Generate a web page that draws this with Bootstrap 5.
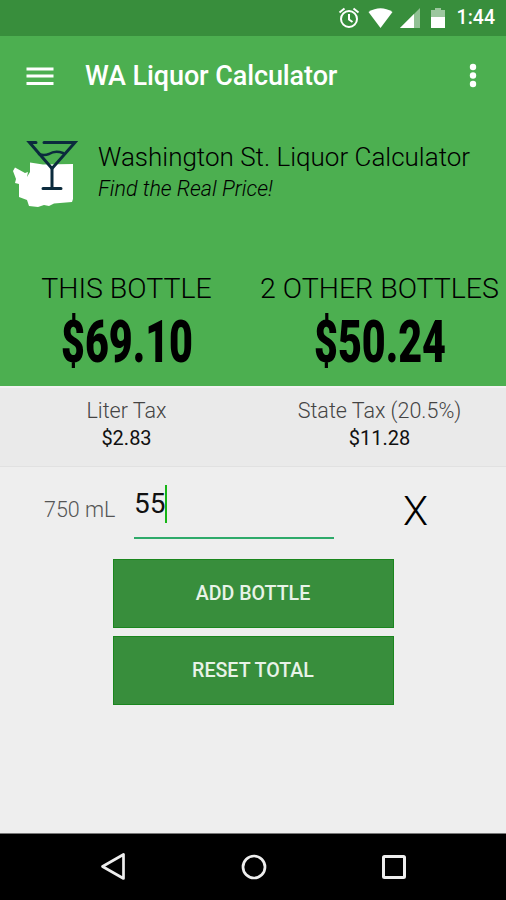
<!DOCTYPE html>
<html lang="en">
<head>
<meta charset="utf-8">
<meta name="viewport" content="width=device-width, initial-scale=1">
<title>WA Liquor Calculator</title>
<link href="https://cdn.jsdelivr.net/npm/bootstrap@5.3.0/dist/css/bootstrap.min.css" rel="stylesheet">
<style>
body{font-family:Roboto,"Liberation Sans",sans-serif;background:#eee;color:#000}
.screen{width:506px;height:900px;overflow:hidden;white-space:nowrap}
svg{display:block;flex:none}
.statusbar{height:36px;background:#388e3c;padding-right:11px}
.clock{font-size:19.5px;font-weight:500;line-height:36px;margin-left:9px}
.appbar{height:80px;padding:0 26px}
.hero{background:#4caf50;height:350px}
.app-title{font-size:27px;font-weight:500;line-height:80px;margin-left:31px;letter-spacing:-.1px}
.brand-row{height:100px;padding-left:12px}
.brand-text{margin-left:20px;padding-top:23px;font-weight:300}
.brand-name{font-size:26px;line-height:36px}
.tagline{font-size:21.5px;line-height:27px;font-style:italic}
.totals{margin-top:56px}
.total-label{font-size:28.5px;line-height:34px;font-weight:300}
.taxes{height:81px;background:#eaeaea;border-top:2px solid #f2f2f2;border-bottom:1px solid #e1e1e1;padding-top:9px}
.tax-label{font-size:21.5px;line-height:27px;font-weight:300;color:#444}
.tax-value{font-size:20px;line-height:28px;color:#111}
.entry{height:92px}
.size-label{width:134px;padding-left:44px;padding-top:29px;font-size:21.5px;line-height:28px;font-weight:300;color:#555}
.amount{width:200px;height:72px;border-bottom:2px solid #2eaa6a;padding-top:18px;font-size:28px;line-height:38px;color:#111}
.caret{width:2px;height:38px;background:#16b516}
.remove{width:163px;font-size:41px;line-height:48px;padding-top:20px;font-weight:300;color:#000}
.action{width:281px;height:69px;background:#388e3c;border:1px solid #1a861e;border-radius:0;color:#e8f3e8;font-size:19.6px;font-weight:500;line-height:1}
.androidnav{height:67px;background:#000;border-top:1px solid #777;padding:0 98px 0 100px}
</style>
<script src="https://cdn.jsdelivr.net/npm/bootstrap@5.3.0/dist/js/bootstrap.bundle.min.js"></script>
</head>
<body>
<div class="screen d-flex flex-column">
  <div class="statusbar d-flex align-items-center justify-content-end text-white">
    <svg width="110" height="36" viewBox="0 0 110 36" fill="#fff">
      <g fill="none" stroke="#fff" stroke-width="2"><circle cx="11" cy="19" r="8"/><path d="M11 14v5.5l3.5 2.5M1.5 12.5l5-4M20.500 12.500l-5-4"/></g>
      <path d="M30.500 12Q42.500 4.500 54.500 12L42.500 28z"/>
      <path d="M82 8v20H62z" opacity=".45"/><path d="M76 14v14H62z"/>
      <path d="M93 10h4V8h6v2h4v8H93z" opacity=".5"/><path d="M93 17h14v11H93z"/>
    </svg>
    <span class="clock">1:44</span>
  </div>
  <header class="hero">
    <div class="appbar d-flex align-items-center text-white">
      <svg width="28" height="20" viewBox="0 0 28 20"><path d="M.5 3h27M.5 10h27M.5 17.500h27" stroke="#fff" stroke-width="3"/></svg>
      <span class="app-title">WA Liquor Calculator</span>
      <svg class="ms-auto" width="14" height="26" viewBox="0 0 14 26" fill="#fff"><circle cx="7" cy="4" r="3.2"/><circle cx="7" cy="12.500" r="3.200"/><circle cx="7" cy="21" r="3.200"/></svg>
    </div>
    <div class="brand-row d-flex">
      <svg width="66" height="100" viewBox="0 0 66 100">
        <path d="M3 51.500l10 5.500 3-1-1 5 3-5V46.500l13 2 30-.5v35l-1 3-18 1.500-5 2.500-5-1-6 2-9-1-2-6-8-3V68l-4-1 1-4-3-8z" fill="#fff"/>
        <g fill="none" stroke="#0b2b3d" stroke-width="3" stroke-linecap="round"><path d="M24 26.500h-6.500L40 52.500l23-26H32"/><path d="M27 38q5 2 10 0 6-4 14-1" stroke-width="2.500"/><path d="M40 52.500V72M31 72.500h18"/></g>
      </svg>
      <div class="brand-text">
        <div class="brand-name">Washington St. Liquor Calculator</div>
        <div class="tagline">Find the Real Price!</div>
      </div>
    </div>
    <div class="totals row g-0 text-center">
      <div class="col-6"><div class="total-label">THIS BOTTLE</div>
        <svg class="mx-auto" width="136" height="64" viewBox="0 0 136 64"><text x="2" y="56" font-family="Roboto" font-weight="900" font-size="60" textLength="132" lengthAdjust="spacingAndGlyphs">$69.10</text></svg>
      </div>
      <div class="col-6"><div class="total-label">2 OTHER BOTTLES</div>
        <svg class="mx-auto" width="136" height="64" viewBox="0 0 136 64"><text x="2" y="56" font-family="Roboto" font-weight="900" font-size="60" textLength="132" lengthAdjust="spacingAndGlyphs">$50.24</text></svg>
      </div>
    </div>
  </header>
  <section class="taxes row g-0 text-center">
    <div class="col-6"><div class="tax-label">Liter Tax</div><div class="tax-value">$2.83</div></div>
    <div class="col-6"><div class="tax-label">State Tax (20.5%)</div><div class="tax-value">$11.28</div></div>
  </section>
  <section class="entry d-flex">
    <div class="size-label">750 mL</div>
    <div class="amount d-flex">55<span class="caret"></span></div>
    <div class="remove text-center">X</div>
  </section>
  <div class="d-flex flex-column align-items-center gap-2">
    <button type="button" class="btn action">ADD BOTTLE</button>
    <button type="button" class="btn action">RESET TOTAL</button>
  </div>
  <nav class="androidnav mt-auto d-flex justify-content-between align-items-center">
    <svg width="28" height="30" viewBox="0 0 28 30"><path d="M2.500 14.500L23.500 2.500v24z" fill="none" stroke="#eee" stroke-width="2.700" stroke-linejoin="round"/></svg>
    <svg width="28" height="28" viewBox="0 0 28 28"><circle cx="14" cy="14" r="11" fill="none" stroke="#eee" stroke-width="2.700"/></svg>
    <svg width="28" height="28" viewBox="0 0 28 28"><rect x="3.500" y="3.500" width="21" height="21" rx="1" fill="none" stroke="#eee" stroke-width="3"/></svg>
  </nav>
</div>
</body>
</html>
